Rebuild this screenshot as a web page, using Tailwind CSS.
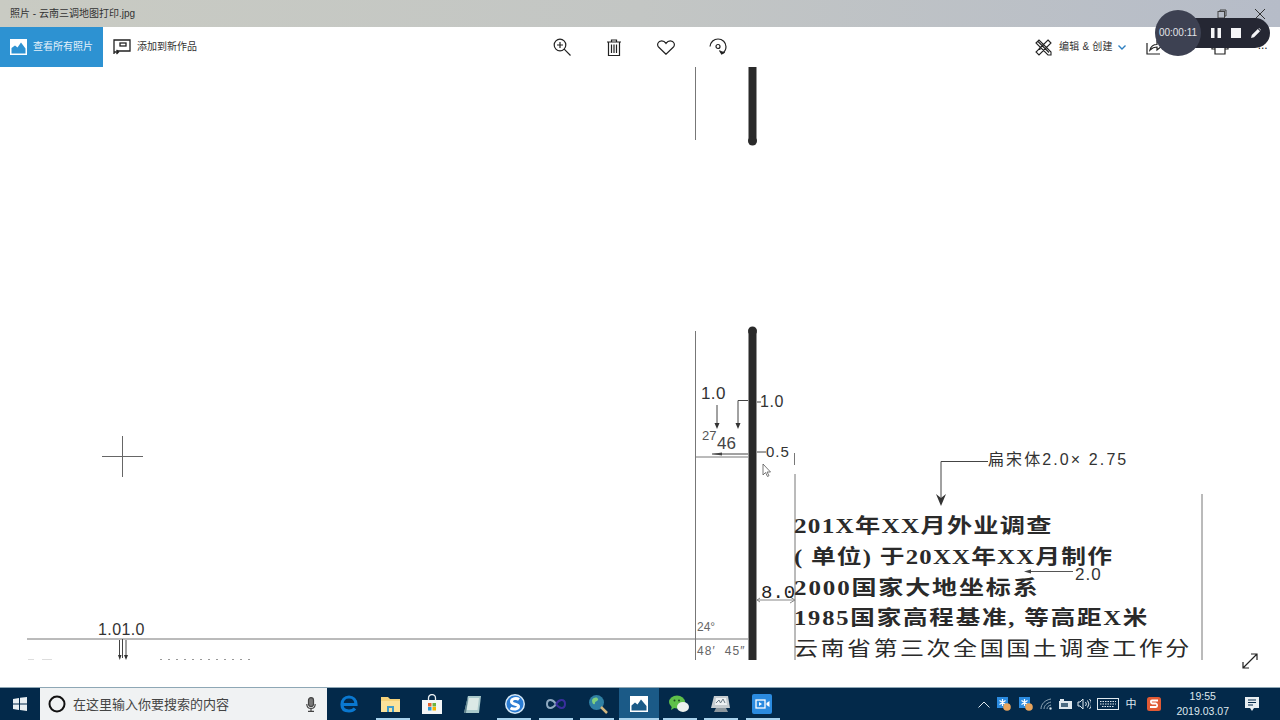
<!DOCTYPE html>
<html lang="zh">
<head>
<meta charset="utf-8">
<title>照片</title>
<script src="https://cdn.jsdelivr.net/npm/@tailwindcss/browser@4"></script>
</head>
<body class="m-0 overflow-hidden bg-white font-['Liberation_Sans','Noto_Sans_CJK_SC',sans-serif]">
<div class="relative flex h-[720px] w-[1280px] flex-col overflow-hidden">

  <!-- title bar -->
  <div class="flex h-[27px] shrink-0 items-center bg-gradient-to-r from-[#c9cbc3] via-[#c3c6c4] to-[#b6bcc8] pl-[10px] pr-[15px] pt-[1px]">
    <span class="flex-1 text-[10px] leading-none text-[#333]">照片 - 云南三调地图打印.jpg</span>
    <svg class="mr-[28px]" width="10" height="10" viewBox="0 0 10 10" fill="none" stroke="#444" stroke-width="1"><rect x="1" y="2.500" width="6.500" height="6.500"/><path d="M3 2.500V1h6v6H7.500"/></svg>
    <svg width="10" height="10" viewBox="0 0 10 10" fill="none" stroke="#333" stroke-width="1"><path d="M0 0l10 10M10 0L0 10"/></svg>
  </div>

  <!-- toolbar -->
  <div class="grid h-[40px] shrink-0 grid-cols-[1fr_auto_1fr] items-center bg-white text-[10px] text-[#333]">
    <div class="flex h-full items-center">
      <div class="flex h-full w-[103px] items-center gap-[6px] bg-[#2d92d2] pl-[10px] text-white">
        <svg width="17" height="16" viewBox="0 0 17 16"><rect width="17" height="16" fill="#fff"/><path d="M1.500 14.500V9l3.500-2.500 2.500 2L11 3.500l4.500 6v5z" fill="#2d92d2"/></svg>
        <span class="mb-[1px] text-[10px] text-[#e4f1fa]">查看所有照片</span>
      </div>
      <div class="ml-[10px] flex items-center gap-[6px]">
        <svg width="18" height="16" viewBox="0 0 18 16" fill="none" stroke="#222" stroke-width="1.300"><path d="M4 12h13V1H1v14"/><rect x="7" y="4" width="6" height="3"/><path d="M1 13h4M3.500 11l2 2-2 2"/></svg>
        <span class="mb-[1px]">添加到新作品</span>
      </div>
    </div>
    <div class="flex items-center">
      <button class="flex w-[52px] justify-center">
        <svg width="18" height="18" viewBox="0 0 18 18" fill="none" stroke="#222" stroke-width="1.200"><circle cx="7" cy="7" r="5.800"/><path d="M11.200 11.200L17.500 17.500M4 7h6M7 4v6"/></svg>
      </button>
      <button class="flex w-[52px] justify-center">
        <svg width="14" height="17" viewBox="0 0 14 17" fill="none" stroke="#222" stroke-width="1.200"><path d="M0 3h14M4.500 3V1h5v2M1.500 3v13.500h11V3M4.500 5.500V14M7 5.500V14M9.500 5.500V14"/></svg>
      </button>
      <button class="flex w-[52px] justify-center">
        <svg width="18" height="15" viewBox="0 0 18 15" fill="none" stroke="#222" stroke-width="1.200"><path d="M9 14.200L1.800 7.300C-.6 4.800 1 .8 4.700.8 6.600.8 8 1.800 9 3.300 10 1.800 11.400.8 13.300.8c3.700 0 5.300 4 2.900 6.500z"/></svg>
      </button>
      <button class="flex w-[52px] justify-center">
        <svg width="18" height="18" viewBox="0 0 18 18" fill="none" stroke="#222" stroke-width="1.200"><path d="M1 8.500C1.500 4 5 1 9 1c4.500 0 8 3.500 8 7.800 0 3.200-1.800 5.700-4.500 7"/><circle cx="9" cy="8.500" r="2"/><path d="M10.500 12.500l2.200 3.400 3-1.600" fill="#222"/></svg>
      </button>
    </div>
    <div class="flex items-center pl-[291px]">
      <svg width="17" height="17" viewBox="0 0 17 17" fill="none" stroke="#222" stroke-width="1.100"><path d="M1 4l3-3 12 12v3h-3zM13 1l3 3L4 16l-3-3zM4 9l1.500 1.500M7 6l1.500 1.500M3 2.500l11 11"/></svg>
      <span class="mb-[1px] ml-[7px] text-[10px] tracking-[0.2px]">编辑 &amp; 创建</span>
      <svg class="ml-[5px]" width="8" height="5" viewBox="0 0 8 5" fill="none" stroke="#2d7fc1" stroke-width="1.400"><path d="M.5.500L4 4 7.500.500"/></svg>
      <svg class="ml-[20px]" width="17" height="15" viewBox="0 0 17 15" fill="none" stroke="#222" stroke-width="1.200"><path d="M1 3v11h13M4 10c1-4 4-5.500 7-5.500V1l5 5-5 4V7c-3 0-5 1-7 3z"/></svg>
      <svg class="ml-[48px]" width="18" height="16" viewBox="0 0 18 16" fill="none" stroke="#222" stroke-width="1.200"><path d="M4 10H1V4h16v6h-3M4 8h10v7H4z"/></svg>
      <span class="mb-[4px] ml-[29px] text-[12px] leading-none text-[#222]">...</span>
    </div>
  </div>

  <!-- photo canvas -->
  <div class="relative flex-1 overflow-hidden bg-white">
    <div class="absolute left-0 top-0 h-[593px] w-full overflow-hidden">
      <svg class="absolute left-0 top-0" width="1280" height="593" viewBox="0 67 1280 593" fill="none">
        <!-- crosshair cursor -->
        <path d="M122.500 436v41M102 456.500h41" stroke="#666" stroke-width="1"/>
        <!-- vertical frame lines -->
        <path d="M695.500 67v73M695.500 331v329" stroke="#777" stroke-width="1"/>
        <path d="M752.500 67v74" stroke="#2a2a2a" stroke-width="8"/>
        <path d="M752.500 332V660" stroke="#2a2a2a" stroke-width="8"/>
        <circle cx="752.500" cy="331" r="4.500" fill="#2a2a2a"/>
        <circle cx="752.500" cy="141" r="4.500" fill="#2a2a2a"/>
        <path d="M795 474v186M794.500 453v12M1202 494v166" stroke="#777" stroke-width="1"/>
        <!-- horizontals -->
        <path d="M695 457h53M27 639h721" stroke="#777" stroke-width="1"/>
        <!-- leaders -->
        <path d="M717 405v21M738 427v-26.500h10M757 402h4M757 452h9M712 454h36" stroke="#444" stroke-width="1"/>
        <path d="M714.500 423l2.500 6 2.500-6zM735.500 423l2.500 6 2.500-6z" fill="#333"/>
        <path d="M712 454l10-1.500v3z" fill="#444"/>
        <path d="M988 461.500h-47v40" stroke="#444" stroke-width="1"/>
        <path d="M936 494l5 12 5-12-5 4z" fill="#333"/>
        <path d="M1073 571.500h-46" stroke="#555" stroke-width="1"/>
        <path d="M1024 571.500l7-2v4z" fill="#444"/>
        <path d="M757 600h38M790 597l5 3-5 3M757 600l3-2M757 600l3 2" stroke="#888" stroke-width="1"/>
        <path d="M119.500 640v18M122.500 639v19M126 640v18" stroke="#444" stroke-width="1"/>
        <path d="M118 655h3.500l-1.700 5zM124 655h4l-2 5z" fill="#333"/>
        <path d="M28 659.500h6M42 659.500h10" stroke="#ddd" stroke-width="1"/>
        <path d="M160 659.500h92" stroke="#999" stroke-width="1" stroke-dasharray="2 6"/>
        <!-- pointer -->
        <path d="M763 464v11l2.500-2.500 2 4 1.500-.8-2-3.700h3.500z" fill="#fff" stroke="#555" stroke-width=".8"/>
      </svg>

      <span class="absolute left-[701px] top-[318px] text-[17px] leading-none tracking-[0.4px] text-[#333]">1.0</span>
      <span class="absolute left-[760px] top-[327px] text-[16px] leading-none tracking-[0.6px] text-[#333]">1.0</span>
      <span class="absolute left-[702px] top-[362px] text-[13px] leading-none text-[#555]">27</span>
      <span class="absolute left-[717px] top-[368px] text-[17px] leading-none text-[#444]">46</span>
      <span class="absolute left-[766px] top-[377px] text-[15px] leading-none tracking-[1px] text-[#333]">0.5</span>
      <span class="absolute left-[98px] top-[555px] text-[16px] leading-none tracking-[0.4px] text-[#333]">1.01.0</span>
      <span class="absolute left-[697px] top-[554px] text-[12px] leading-none text-[#666]">24°</span>
      <span class="absolute left-[697px] top-[578px] text-[12px] leading-none tracking-[1.100px] text-[#666]">48′&nbsp;&nbsp;45″</span>
      <span class="absolute left-[761px] top-[517px] font-['Liberation_Mono',monospace] text-[19px] leading-none text-[#222]">8.0</span>

      <span class="absolute left-[988px] top-[385px] text-[16px] leading-none tracking-[2.100px] text-[#333]">扁宋体2.0× 2.75</span>
      <span class="absolute left-[1075px] top-[501px] text-[17px] leading-[14px] tracking-[1px] text-[#333]">2.0</span>

      <div class="absolute left-[794px] top-[449px] flex w-[420px] flex-col gap-[10.750px] whitespace-nowrap font-['Liberation_Serif','Noto_Sans_CJK_SC',serif] text-[20px] font-bold leading-[20px] text-[#2a2a2a]">
        <span class="origin-left scale-x-[1.26] tracking-[1px]">201X年XX月外业调查</span>
        <span class="origin-left scale-x-[1.237] tracking-[1px]">( 单位) 于20XX年XX月制作</span>
        <span class="origin-left scale-x-[1.25] tracking-[1.500px]">2000国家大地坐标系</span>
        <span class="origin-left scale-x-[1.225] tracking-[1.500px]">1985国家高程基准, 等高距X米</span>
        <span class="origin-left scale-x-[1.2] tracking-[2.100px] font-normal">云南省第三次全国国土调查工作分</span>
      </div>
    </div>

    <!-- expand -->
    <svg class="absolute right-[22px] bottom-[18px]" width="16" height="16" viewBox="0 0 16 16" fill="none" stroke="#222" stroke-width="1.200"><path d="M1 15L15 1M9 1h6v6M1 9v6h6"/></svg>
  </div>

  <!-- taskbar -->
  <div class="relative flex h-[33px] shrink-0 items-stretch border-t border-[#8ea7b5] bg-[#03294a] text-white">
    <div class="flex w-[40px] items-center justify-center">
      <svg width="14" height="14" viewBox="0 0 14 14" fill="#e8eef2"><path d="M0 2l6-1v5.500H0zM7 .800L14 0v6.500H7zM0 7.500h6V13l-6-1zM7 7.500h7V14l-7-1z"/></svg>
    </div>
    <div class="flex w-[287px] items-center bg-[#f0f2f3] pl-[8px] pr-[11px] text-[#444]">
      <svg width="18" height="18" viewBox="0 0 18 18" fill="none" stroke="#111" stroke-width="2"><circle cx="9" cy="9" r="7.500"/></svg>
      <span class="ml-[7px] flex-1 text-[13px] leading-none">在这里输入你要搜索的内容</span>
      <svg width="10" height="15" viewBox="0 0 10 15" fill="none" stroke="#444" stroke-width="1.200"><rect x="2.500" y=".6" width="5" height="9" rx="2.500" fill="#777"/><path d="M.8 7c0 3 1.500 4.500 4.200 4.500S9.200 10 9.200 7M5 11.500v2.500M2 14.400h6"/></svg>
    </div>

    <div class="ml-[1px] flex items-center">
      <div class="flex h-full w-[41.500px] items-center justify-center">
        <svg width="18" height="18" viewBox="0 0 18 18" fill="none" stroke="#0a78d0" stroke-width="3.200"><path d="M2 9.500h14C16 5 13 2 9 2 5 2 2 5 2 9.500S5 16 9 16c2.500 0 4.500-.8 6-2.500"/></svg>
      </div>
      <div class="relative flex h-full w-[41.500px] items-center justify-center">
        <svg width="19" height="16" viewBox="0 0 19 16"><path d="M0 1h7l2 2h10v13H0z" fill="#f5d27a"/><rect y="5" width="19" height="11" fill="#fbe29a"/><path d="M6 16V10h7v6h-2v-4H8v4z" fill="#3f9bc9"/></svg>
        <span class="absolute bottom-0 left-[6px] h-[2px] w-[34px] bg-[#a9d2ec]"></span>
      </div>
      <div class="flex h-full w-[41.500px] items-center justify-center">
        <svg width="20" height="20" viewBox="0 0 20 20"><path d="M6.500 6V4a3.500 3.500 0 017 0v2" fill="none" stroke="#e8eef2" stroke-width="1.300"/><rect y="6" width="20" height="14" fill="#f4f6f7"/><rect x="6" y="9" width="3.500" height="3.500" fill="#e8622c"/><rect x="10.500" y="9" width="3.500" height="3.500" fill="#6eb33f"/><rect x="6" y="13" width="3.500" height="3.500" fill="#2a9ad6"/><rect x="10.500" y="13" width="3.500" height="3.500" fill="#f4b400"/></svg>
      </div>
      <div class="flex h-full w-[41.500px] items-center justify-center">
        <svg width="18" height="19" viewBox="0 0 18 19"><path d="M4 1h13l-2 17H0z" fill="#a9c9cb"/><path d="M5 3h10l-1.500 12H2.500z" fill="#dbe9e6"/><path d="M0 18l4-17v3L2 18z" fill="#5d7f8a"/></svg>
      </div>
      <div class="relative flex h-full w-[41.500px] items-center justify-center">
        <svg width="20" height="20" viewBox="0 0 20 20" fill="none"><circle cx="10" cy="10" r="10" fill="#d6e8f6"/><circle cx="10" cy="10" r="8.500" fill="#2b7cd3"/><path d="M14 5.500C11.500 3.500 6.500 4.500 6.500 7.500c0 3.500 7 2 7 5 0 2.500-5 3.500-8 1.500" stroke="#fff" stroke-width="3"/></svg>
        <span class="absolute bottom-0 left-[3px] h-[2px] w-[34px] bg-[#a9d2ec]"></span>
      </div>
      <div class="relative flex h-full w-[41.500px] items-center justify-center">
        <svg width="20" height="10" viewBox="0 0 20 10" fill="none" stroke-width="2"><path d="M10 5C8 2 6 1 4.500 1 2.500 1 1 2.700 1 5s1.500 4 3.500 4C6 9 8 8 10 5" stroke="#8fa9c0"/><path d="M10 5c2-3 4-4 5.500-4C17.500 1 19 2.700 19 5s-1.500 4-3.500 4C14 9 12 8 10 5" stroke="#3a2f9e"/></svg>
        <span class="absolute bottom-0 left-[3px] h-[2px] w-[34px] bg-[#a9d2ec]"></span>
      </div>
      <div class="relative flex h-full w-[41.500px] items-center justify-center">
        <svg width="20" height="20" viewBox="0 0 20 20" fill="none"><circle cx="8.500" cy="8.500" r="7.500" fill="#2f7fa3"/><path d="M4 6c2-3 5-3 6-1s-3 2-3 4-3 2-3-3z" fill="#7fcf7e"/><path d="M13 13l6 6" stroke="#d3b77e" stroke-width="2.500"/></svg>
        <span class="absolute bottom-0 left-[3px] h-[2px] w-[34px] bg-[#a9d2ec]"></span>
      </div>
      <div class="relative flex h-full w-[40px] items-center justify-center bg-[#1b5a87]">
        <svg width="18" height="16" viewBox="0 0 18 16"><rect width="18" height="16" fill="#fff"/><path d="M1.500 14.500V9.500L5 6.500l2.500 2L11 3.500l5.500 6.500v4.500z" fill="#1b5a87"/></svg>
        <span class="absolute bottom-0 left-0 h-[2px] w-[40px] bg-[#a9d2ec]"></span>
      </div>
      <div class="relative flex h-full w-[41.500px] items-center justify-center">
        <svg width="20" height="18" viewBox="0 0 20 18"><ellipse cx="8" cy="7" rx="8" ry="6.500" fill="#5fc04a"/><path d="M3 11l-1 4 4-2.500z" fill="#5fc04a"/><ellipse cx="14" cy="12" rx="6" ry="5" fill="#eef2ee"/><circle cx="5.500" cy="5.500" r="1" fill="#1d4d22"/><circle cx="10" cy="5.500" r="1" fill="#1d4d22"/></svg>
        <span class="absolute bottom-0 left-[4px] h-[2px] w-[34px] bg-[#a9d2ec]"></span>
      </div>
      <div class="relative flex h-full w-[41.500px] items-center justify-center">
        <svg width="19" height="18" viewBox="0 0 19 18"><path d="M3 1h14l2 12H0z" fill="#c6ccd0"/><path d="M5 3h10l1 7H4z" fill="#eef1f3"/><path d="M5 8l3-3 1.500 3L12 4l2 4" fill="none" stroke="#6a7a85"/><path d="M5 13h10l2 4H3z" fill="#8d979e"/></svg>
        <span class="absolute bottom-0 left-[4px] h-[2px] w-[34px] bg-[#a9d2ec]"></span>
      </div>
      <div class="relative flex h-full w-[41.500px] items-center justify-center">
        <svg width="20" height="20" viewBox="0 0 20 20"><rect width="20" height="20" rx="2" fill="#2b8be0"/><rect x="4" y="6" width="9" height="8" fill="none" stroke="#fff" stroke-width="1.300"/><path d="M7 8v4l3-2zM14.500 9l3-2v6l-3-2z" fill="#fff"/></svg>
        <span class="absolute bottom-0 left-[4px] h-[2px] w-[34px] bg-[#a9d2ec]"></span>
      </div>
    </div>

    <!-- tray -->
    <div class="ml-auto flex items-center text-[#dfe8ee]">
      <svg class="mr-[7px]" width="12" height="7" viewBox="0 0 12 7" fill="none" stroke="#dfe8ee" stroke-width="1"><path d="M.5 6.500L6 1l5.500 5.500"/></svg>
      <svg class="mr-[8px]" width="14" height="14" viewBox="0 0 14 14"><rect width="11" height="11" fill="#2b8be0"/><path d="M5.500 2v7M2.500 3.500l6 4M8.500 3.500l-6 4" stroke="#fff" stroke-width="1.200"/><circle cx="10" cy="10" r="3.800" fill="#e8a45c"/></svg>
      <svg class="mr-[7px]" width="14" height="14" viewBox="0 0 14 14"><rect width="11" height="11" fill="#2b8be0"/><path d="M5.500 2v7M2.500 3.500l6 4M8.500 3.500l-6 4" stroke="#fff" stroke-width="1.200"/><circle cx="10" cy="10" r="3.800" fill="#e8a45c"/></svg>
      <svg class="mr-[7px]" width="12" height="12" viewBox="0 0 12 12" fill="none" stroke="#8fa6b6" stroke-width="1"><path d="M1 11c0-5 4-9 10-10M4 11c0-3 2.500-6 7-7M7 11c0-2 1.500-3.500 4-4"/><circle cx="10.500" cy="10.500" r="1" fill="#dfe8ee"/></svg>
      <svg class="mr-[5px]" width="13" height="10" viewBox="0 0 13 10"><rect y="2" width="13" height="8" fill="#dfe8ee"/><rect x="1" y="0" width="4" height="3" fill="#dfe8ee"/><rect x="2" y="4" width="7" height="4" fill="#4b6b82"/></svg>
      <svg class="mr-[6px]" width="14" height="12" viewBox="0 0 14 12" fill="none" stroke="#dfe8ee" stroke-width="1"><path d="M1 4v4h2l3 3V1L3 4zM8.500 4a3 3 0 010 4M10.500 2.500a5.500 5.500 0 010 7M12.500 1a8 8 0 010 10"/></svg>
      <svg class="mr-[6px]" width="22" height="12" viewBox="0 0 22 12" fill="none" stroke="#dfe8ee" stroke-width="1"><rect x=".5" y=".5" width="21" height="11"/><path d="M3 3.500h16M3 6h16M5 8.500h12" stroke-dasharray="1.500 1"/></svg>
      <span class="mr-[11px] text-[11px] leading-none">中</span>
      <svg class="mr-[15px]" width="14" height="14" viewBox="0 0 14 14"><rect width="14" height="14" rx="2.500" fill="#e05a34"/><path d="M11 3.500H5C3.500 3.500 3.500 6 5 6.500h4c1.500.5 1.500 3.500 0 3.500H3" fill="none" stroke="#fff" stroke-width="1.800"/></svg>
      <div class="mr-[16px] flex flex-col items-center text-[10.500px] leading-[15px]">
        <span>19:55</span>
        <span>2019.03.07</span>
      </div>
      <svg class="mr-[21px]" width="14" height="14" viewBox="0 0 14 14"><path d="M0 0h14v11H9l-2 3-2-3H0z" fill="#e8eef2"/><path d="M3 3h8M3 5.500h8M3 8h5" stroke="#03294a"/></svg>
    </div>
  </div>

  <!-- screen recorder overlay -->
  <div class="absolute left-[1178px] top-[18px] flex h-[30px] w-[92px] items-center gap-[10px] rounded-r-full bg-[#252733] pl-[33px]">
    <svg width="10" height="10" viewBox="0 0 10 10" fill="#f4f4f6"><rect x="0" width="3.500" height="10"/><rect x="6.500" width="3.500" height="10"/></svg>
    <svg width="10" height="10" viewBox="0 0 10 10" fill="#f4f4f6"><rect width="10" height="10"/></svg>
    <svg width="10" height="10" viewBox="0 0 10 10" fill="#f4f4f6"><path d="M0 10l.8-3L6.800 1 9 3.200l-6 6zM7.500.300l.6-.3L10 1.900l-.3.600z"/></svg>
  </div>
  <div class="absolute left-[1155px] top-[10px] flex h-[46px] w-[46px] items-center justify-center rounded-full bg-[#3d4152] text-[10px] leading-none text-[#e2e3e8]">00:00:11</div>
</div>
</body>
</html>
